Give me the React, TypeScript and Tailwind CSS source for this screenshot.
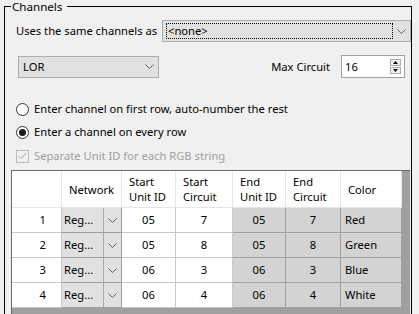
import React from "react";

const cols = "grid grid-cols-[50px_60px_54px_57px_53px_55px_61px]";

const rows = [
  { n: 1, su: "05", sc: "7", eu: "05", ec: "7", color: "Red" },
  { n: 2, su: "05", sc: "8", eu: "05", ec: "8", color: "Green" },
  { n: 3, su: "06", sc: "3", eu: "06", ec: "3", color: "Blue" },
  { n: 4, su: "06", sc: "4", eu: "06", ec: "4", color: "White" },
];

function Chevron() {
  return (
    <svg width="9" height="5" viewBox="0 0 9 5">
      <polyline points="0.5,0.5 4.5,4.5 8.5,0.5" fill="none" stroke="#606060" strokeWidth="1" />
    </svg>
  );
}

function Radio({ checked, label }: { checked?: boolean; label: string }) {
  return (
    <div className="flex items-center h-[22px] gap-[5px]">
      <span className="w-[13px] h-[13px] rounded-full border border-[#333333] bg-white flex items-center justify-center shrink-0">
        {checked && <span className="w-[7px] h-[7px] rounded-full bg-[#1a1a1a]" />}
      </span>
      <span>{label}</span>
    </div>
  );
}

export default function App() {
  return (
    <div className="w-[419px] h-[314px] overflow-hidden bg-[#f0f0f0] text-[11.2px] text-black font-['Noto_Sans',sans-serif] leading-[16px]">
      <fieldset className="ml-[4px] w-[407px] border border-black p-0 m-0">
        <legend className="ml-[6px] pl-[1px] pr-[5px] leading-[13px] text-[11.6px]">Channels</legend>
        <div className="pl-[11px]">
          {/* same channels row */}
          <div className="flex items-center mt-[7px]">
            <span className="w-[146px] shrink-0 whitespace-nowrap">Uses the same channels as</span>
            <div className="w-[249px] h-[22px] shrink-0 border border-[#adadad] bg-[#e1e1e1] flex items-center">
              <div className="ml-[3px] w-[227px] h-[16px] border border-dotted border-black flex items-center pl-[1px]">
                &lt;none&gt;
              </div>
              <div className="flex-1 flex justify-center">
                <Chevron />
              </div>
            </div>
          </div>

          {/* network + max circuit */}
          <div className="flex items-center mt-[13px] h-[23px]">
            <div className="ml-[2px] w-[141px] h-[22px] border border-[#adadad] bg-[#e1e1e1] flex items-center pl-[4px] pr-[4px]">
              <span className="flex-1">LOR</span>
              <Chevron />
            </div>
            <span className="ml-auto mr-[11px]">Max Circuit</span>
            <div className="w-[64px] h-[23px] mr-[6px] border border-[#a0a0a0] bg-white flex items-center pl-[3px]">
              <span className="flex-1">16</span>
              <div className="flex flex-col gap-px mr-[3px]">
                <div className="w-[11px] h-[7px] border border-[#adadad] bg-[#f0f0f0] flex items-center justify-center">
                  <svg width="5" height="3" viewBox="0 0 5 3">
                    <polygon points="2.5,0 5,3 0,3" fill="#000" />
                  </svg>
                </div>
                <div className="w-[11px] h-[7px] border border-[#adadad] bg-[#f0f0f0] flex items-center justify-center">
                  <svg width="5" height="3" viewBox="0 0 5 3">
                    <polygon points="0,0 5,0 2.5,3" fill="#000" />
                  </svg>
                </div>
              </div>
            </div>
          </div>

          <div className="mt-[20px]">
            <Radio label="Enter channel on first row, auto-number the rest" />
          </div>
          <div className="mt-[1px]">
            <Radio checked label="Enter a channel on every row" />
          </div>
          <div className="mt-[2px] flex items-center h-[22px] gap-[5px] text-[#a0a0a0]">
            <span className="w-[13px] h-[13px] border border-[#bcbcbc] bg-[#f0f0f0] flex items-center justify-center shrink-0">
              <svg width="9" height="8" viewBox="0 0 9 8">
                <polyline points="0.5,4 3.2,6.7 8.5,0.8" fill="none" stroke="#a8a8a8" strokeWidth="1" />
              </svg>
            </span>
            <span>Separate Unit ID for each RGB string</span>
          </div>

          {/* grid */}
          <div className="mt-[3px] -ml-[5px] w-[399px] h-[150px] border-t border-l border-[#696969] bg-[#a0a0a0]">
            <div className={`${cols} h-[37px] w-[390px] bg-white`}>
              <div className="border-r border-b border-[#e5e5e5]" />
              {["Network", "Start\nUnit ID", "Start\nCircuit", "End\nUnit ID", "End\nCircuit", "Color"].map((h) => (
                <div
                  key={h}
                  className="border-r border-b border-[#e5e5e5] flex items-center pl-[7px] whitespace-pre-line leading-[15px]"
                >
                  {h}
                </div>
              ))}
            </div>
            {rows.map((r) => (
              <div key={r.n} className={`${cols} h-[25px] w-[390px]`}>
                <div className="bg-white border-r border-b border-[#c8c8c8] flex items-center justify-end pr-[15px]">
                  {r.n}
                </div>
                <div className="border-r border-b border-[#a0a0a0] flex bg-[#e1e1e1]">
                  <div className="w-[42px] flex items-center pl-[2px] border-r border-[#a9a9a9]">Reg...</div>
                  <div className="flex-1 flex items-center justify-center">
                    <Chevron />
                  </div>
                </div>
                <div className="bg-white border-r border-b border-[#c8c8c8] flex items-center justify-center">{r.su}</div>
                <div className="bg-white border-r border-b border-[#c8c8c8] flex items-center justify-center">{r.sc}</div>
                <div className="bg-[#d3d3d3] border-r border-b border-[#a0a0a0] flex items-center justify-center">{r.eu}</div>
                <div className="bg-[#d3d3d3] border-r border-b border-[#a0a0a0] flex items-center justify-center">{r.ec}</div>
                <div className="bg-[#d3d3d3] border-r border-b border-[#a0a0a0] flex items-center pl-[4px]">{r.color}</div>
              </div>
            ))}
          </div>
        </div>
      </fieldset>
    </div>
  );
}
